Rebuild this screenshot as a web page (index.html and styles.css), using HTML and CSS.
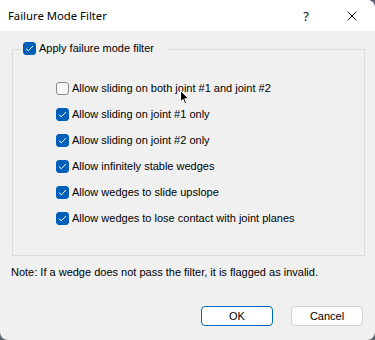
FILE: index.html
```html
<!DOCTYPE html>
<html>
<head>
<meta charset="utf-8">
<link rel="stylesheet" href="styles.css">
</head>
<body>
<div class="window">
  <div class="titlebar">
    <span class="title">Failure Mode Filter</span>
    <div class="caption-btns">
      <span class="cap-btn help">?</span>
      <span class="cap-btn close">
        <svg width="10" height="10" viewBox="0 0 10 10"><path d="M0.5 0.5L9.5 9.5M9.5 0.5L0.5 9.5" stroke="#111" stroke-width="1"/></svg>
      </span>
    </div>
  </div>
  <div class="content">
    <div class="group">
      <div class="group-head">
        <span class="cb checked"><svg width="9" height="7" viewBox="0 0 9 7"><path d="M1 3.6L3.3 5.8L8 1" stroke="#fff" stroke-width="1" fill="none"/></svg></span>
        <span class="lbl">Apply failure mode filter</span>
      </div>
      <div class="rows">
        <div class="row"><span class="cb"></span><span class="lbl">Allow sliding on both joint #1 and joint #2</span></div>
        <div class="row"><span class="cb checked"><svg width="9" height="7" viewBox="0 0 9 7"><path d="M1 3.6L3.3 5.8L8 1" stroke="#fff" stroke-width="1" fill="none"/></svg></span><span class="lbl">Allow sliding on joint #1 only</span></div>
        <div class="row"><span class="cb checked"><svg width="9" height="7" viewBox="0 0 9 7"><path d="M1 3.6L3.3 5.8L8 1" stroke="#fff" stroke-width="1" fill="none"/></svg></span><span class="lbl">Allow sliding on joint #2 only</span></div>
        <div class="row"><span class="cb checked"><svg width="9" height="7" viewBox="0 0 9 7"><path d="M1 3.6L3.3 5.8L8 1" stroke="#fff" stroke-width="1" fill="none"/></svg></span><span class="lbl">Allow infinitely stable wedges</span></div>
        <div class="row"><span class="cb checked"><svg width="9" height="7" viewBox="0 0 9 7"><path d="M1 3.6L3.3 5.8L8 1" stroke="#fff" stroke-width="1" fill="none"/></svg></span><span class="lbl">Allow wedges to slide upslope</span></div>
        <div class="row"><span class="cb checked"><svg width="9" height="7" viewBox="0 0 9 7"><path d="M1 3.6L3.3 5.8L8 1" stroke="#fff" stroke-width="1" fill="none"/></svg></span><span class="lbl">Allow wedges to lose contact with joint planes</span></div>
      </div>
    </div>
    <p class="note">Note: If a wedge does not pass the filter, it is flagged as invalid.</p>
    <div class="buttons">
      <button class="btn default">OK</button>
      <button class="btn">Cancel</button>
    </div>
  </div>
  <svg class="cursor" width="10" height="15" viewBox="0 0 10 15"><path d="M0.5 0.5V11.8L3.1 9.4L4.9 13.8L6.6 13.1L4.8 8.8H8.6L0.5 0.5Z" fill="#000" stroke="#fff" stroke-width="1"/></svg>
</div>
</body>
</html>
```
FILE: styles.css
```css
html, body {
  margin: 0;
  padding: 0;
}
body {
  background: #5c6670;
  width: 375px;
  height: 340px;
  overflow: hidden;
}
.window {
  position: relative;
  width: 375px;
  height: 340px;
  background: #f0f0f0;
  border-radius: 0 8px 8px 8px;
  overflow: hidden;
  font-family: "Liberation Sans", Arial, sans-serif;
  font-size: 11px;
  color: #000;
}
.titlebar {
  height: 31px;
  background: #fff;
  display: flex;
  align-items: center;
  justify-content: space-between;
  padding-left: 8px;
}
.title {
  font-family: "Noto Sans", sans-serif;
  font-size: 11.3px;
  color: #000;
}
.caption-btns {
  display: flex;
  height: 31px;
}
.cap-btn {
  width: 46px;
  height: 31px;
  display: flex;
  align-items: center;
  justify-content: center;
}
.help {
  font-family: "Noto Sans", sans-serif;
  font-size: 13px;
  color: #111;
}
.content {
  display: flex;
  flex-direction: column;
  padding-top: 18px;
}
.group {
  margin: 0 10px 0 12px;
  border: 1px solid #dcdcdc;
  height: 205px;
}
.group-head {
  display: flex;
  align-items: center;
  gap: 3px;
  width: fit-content;
  margin-top: -9px;
  margin-left: 10px;
  padding-right: 13px;
  background: #f0f0f0;
  height: 14px;
}
.cb {
  width: 13px;
  height: 13px;
  box-sizing: border-box;
  border-radius: 3px;
  border: 1px solid #8a8a8a;
  background: #f7f7f7;
  display: flex;
  align-items: center;
  justify-content: center;
  flex: none;
}
.cb.checked {
  background: #005fb8;
  border-color: #005fb8;
}
.lbl {
  line-height: 13px;
  white-space: nowrap;
}
.rows {
  display: flex;
  flex-direction: column;
  gap: 13px;
  padding: 27px 0 0 43px;
}
.row {
  display: flex;
  align-items: center;
  gap: 3px;
  height: 13px;
}
.note {
  margin: 10px 0 0 11px;
  line-height: 13px;
}
.buttons {
  display: flex;
  justify-content: flex-end;
  gap: 18px;
  margin: 27px 12px 0 0;
}
.btn {
  width: 72px;
  height: 20px;
  box-sizing: border-box;
  border: 1px solid #d0d0d0;
  border-radius: 4px;
  background: #fdfdfd;
  font-family: "Liberation Sans", Arial, sans-serif;
  font-size: 11px;
  color: #000;
  padding: 0;
}
.btn.default {
  border-color: #0067c0;
  background: #fff;
}
.cursor {
  position: absolute;
  left: 180px;
  top: 90px;
}
```
